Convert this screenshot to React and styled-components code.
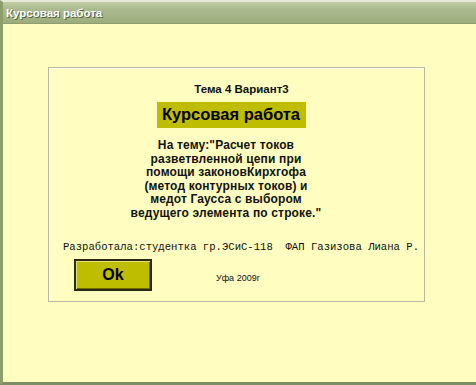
import React from "react";
import styled, { createGlobalStyle } from "styled-components";

const Global = createGlobalStyle`
  html, body {
    margin: 0;
    padding: 0;
    background: #fffec0;
  }
`;

const Window = styled.div`
  width: 476px;
  height: 385px;
  display: flex;
  flex-direction: column;
  box-sizing: border-box;
  border-left: 3px solid #8d9d6c;
  border-top: 2px solid #e6e9d8;
  border-bottom: 3px solid #7e8e62;
  background: #fffec0;
  font-family: "Liberation Sans", Arial, sans-serif;
  overflow: hidden;
`;

const TitleBar = styled.div`
  height: 21px;
  flex: none;
  display: flex;
  align-items: center;
  padding-left: 3px;
  background: linear-gradient(
    to bottom,
    #c3cda8 0%,
    #aebd92 25%,
    #a5b587 60%,
    #9cad7d 100%
  );
  border-bottom: 1px solid #8e9e70;
  color: #ffffff;
  font-weight: bold;
  font-size: 11.5px;
  text-shadow: 1px 1px 0 #55633a;
`;

const Body = styled.div`
  flex: 1;
  padding: 43px 0 0 45px;
`;

const Panel = styled.div`
  width: 377px;
  height: 235px;
  box-sizing: border-box;
  border: 1px solid #b9b8a2;
  box-shadow: inset 1px 1px 0 #fffff0;
  display: flex;
  flex-direction: column;
  align-items: center;
`;

const Theme = styled.div`
  margin: 14px 0 0 10px;
  font-size: 11.5px;
  font-weight: bold;
  color: #111;
  line-height: 14px;
`;

const Heading = styled.div`
  margin: 6px 10px 0 0;
  width: 149px;
  height: 26px;
  box-sizing: border-box;
  padding: 2px 0 0 5px;
  background: #bfbd00;
  font-size: 16.5px;
  font-weight: bold;
  color: #000;
  line-height: 20px;
`;

const Topic = styled.div`
  margin: 11px 21px 0 0;
  text-align: center;
  font-size: 12px;
  font-weight: bold;
  letter-spacing: 0.15px;
  line-height: 13.6px;
  color: #111;
`;

const Author = styled.div`
  align-self: flex-start;
  margin: 20px 0 0 14px;
  font-family: "Liberation Mono", "Courier New", monospace;
  font-size: 10.6px;
  line-height: 12px;
  color: #111;
  white-space: pre;
`;

const Footer = styled.div`
  align-self: stretch;
  display: flex;
  align-items: center;
  margin-top: 6px;
  padding-left: 25px;
  gap: 64px;
`;

const OkButton = styled.button`
  width: 78px;
  height: 32px;
  box-sizing: border-box;
  border: 2px solid #2a2a10;
  box-shadow: inset 1px 1px 0 #e2e070, inset -1px -1px 0 #6e6c00;
  background: #bfbd00;
  font-family: "Liberation Sans", Arial, sans-serif;
  font-size: 16px;
  font-weight: bold;
  color: #000;
  padding: 0;
`;

const City = styled.div`
  font-size: 9px;
  color: #111;
  margin-top: 7px;
`;

export default function App() {
  return (
    <>
      <Global />
      <Window>
        <TitleBar>Курсовая работа</TitleBar>
        <Body>
          <Panel>
            <Theme>Тема 4 Вариант3</Theme>
            <Heading>Курсовая работа</Heading>
            <Topic>
              На тему:"Расчет токов
              <br />
              разветвленной цепи при
              <br />
              помощи законовКирхгофа
              <br />
              (метод контурных токов) и
              <br />
              медот Гаусса с выбором
              <br />
              ведущего элемента по строке."
            </Topic>
            <Author>Разработала:студентка гр.ЭСиС-118  ФАП Газизова Лиана Р.</Author>
            <Footer>
              <OkButton>Ok</OkButton>
              <City>Уфа 2009г</City>
            </Footer>
          </Panel>
        </Body>
      </Window>
    </>
  );
}
